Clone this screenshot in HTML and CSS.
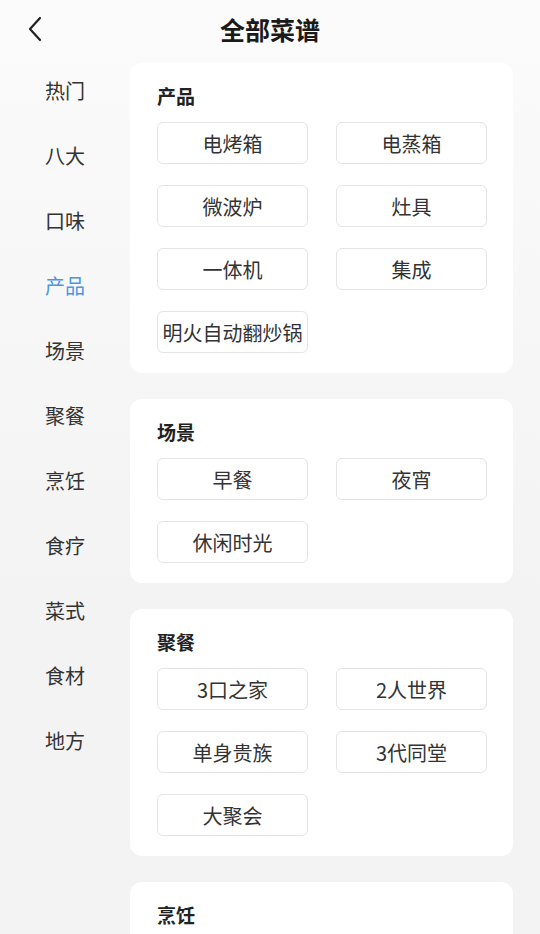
FILE: index.html
```html
<!DOCTYPE html>
<html lang="zh-CN">
<head>
    <meta charset="UTF-8" />
    <title>全部菜谱</title>
    <link rel="stylesheet" href="styles.css">
</head>
<body>
    <header class="top-bar">
        <a class="back-btn" href="#">
            <svg width="16" height="26" viewBox="0 0 16 26">
                <path d="M13 2 L3 13 L13 24" fill="none" stroke="#222" stroke-width="2.2" stroke-linecap="round" stroke-linejoin="round"/>
            </svg>
        </a>
        <h1>全部菜谱</h1>
    </header>

    <div class="page">
        <nav class="side-menu">
            <a href="#">热门</a>
            <a href="#">八大</a>
            <a href="#">口味</a>
            <a href="#" class="active">产品</a>
            <a href="#">场景</a>
            <a href="#">聚餐</a>
            <a href="#">烹饪</a>
            <a href="#">食疗</a>
            <a href="#">菜式</a>
            <a href="#">食材</a>
            <a href="#">地方</a>
        </nav>

        <div class="content">
            <section class="group">
                <h3>产品</h3>
                <div class="chips">
                    <span class="chip">电烤箱</span>
                    <span class="chip">电蒸箱</span>
                    <span class="chip">微波炉</span>
                    <span class="chip">灶具</span>
                    <span class="chip">一体机</span>
                    <span class="chip">集成</span>
                    <span class="chip">明火自动翻炒锅</span>
                </div>
            </section>

            <section class="group">
                <h3>场景</h3>
                <div class="chips">
                    <span class="chip">早餐</span>
                    <span class="chip">夜宵</span>
                    <span class="chip">休闲时光</span>
                </div>
            </section>

            <section class="group">
                <h3>聚餐</h3>
                <div class="chips">
                    <span class="chip">3口之家</span>
                    <span class="chip">2人世界</span>
                    <span class="chip">单身贵族</span>
                    <span class="chip">3代同堂</span>
                    <span class="chip">大聚会</span>
                </div>
            </section>

            <section class="group last">
                <h3>烹饪</h3>
            </section>
        </div>
    </div>
</body>
</html>
```

FILE: styles.css
```css
html, body {
    height: 100%;
}
body {
    font-family: "Noto Sans CJK SC", "Noto Sans", sans-serif;
    background: linear-gradient(#fbfbfb, #f3f3f3 600px);
    margin: 0;
    padding: 0;
    color: #333;
    overflow: hidden;
}
.top-bar {
    height: 58px;
    display: flex;
    align-items: center;
    justify-content: center;
    position: relative;
}
.top-bar h1 {
    margin: 0;
    font-size: 25px;
    font-weight: bold;
    color: #1a1a1a;
    line-height: 1;
}
.back-btn {
    position: absolute;
    left: 27px;
    top: 16px;
    display: flex;
}
.page {
    display: flex;
    align-items: flex-start;
}
.side-menu {
    width: 130px;
    flex-shrink: 0;
    display: flex;
    flex-direction: column;
}
.side-menu a {
    height: 65px;
    display: flex;
    align-items: center;
    justify-content: center;
    font-size: 20px;
    color: #333;
    text-decoration: none;
}
.side-menu a.active {
    color: #4b95e4;
}
.content {
    width: 383px;
    padding-top: 5px;
    display: flex;
    flex-direction: column;
    gap: 26px;
}
.group {
    background: white;
    border-radius: 12px;
    padding: 21px 26px 20px 27px;
}
.group.last {
    min-height: 60px;
}
.group h3 {
    margin: 0 0 14px;
    font-size: 19px;
    line-height: 24px;
    font-weight: bold;
    color: #222;
}
.chips {
    display: grid;
    grid-template-columns: 151px 151px;
    column-gap: 28px;
    row-gap: 21px;
}
.chip {
    height: 42px;
    box-sizing: border-box;
    border: 1px solid #e4e4e4;
    border-radius: 6px;
    display: flex;
    align-items: center;
    justify-content: center;
    font-size: 20px;
    color: #333;
    white-space: nowrap;
    overflow: hidden;
}
```
